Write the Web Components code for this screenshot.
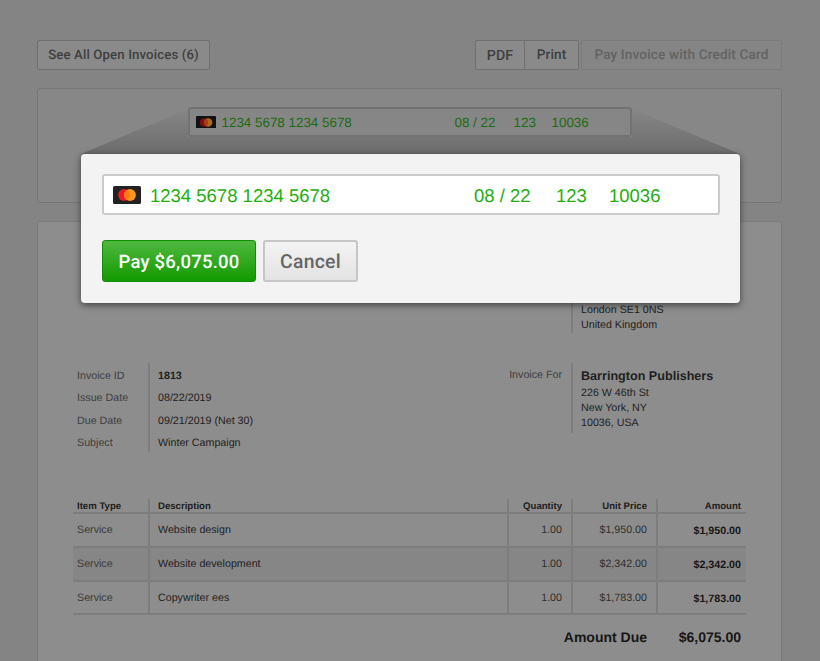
<!DOCTYPE html>
<html lang="en"><head><meta charset="utf-8"><title>Invoice</title>
<style>
html,body{margin:0;padding:0;height:661px;overflow:hidden;background:#848484}
</style></head><body>
<invoice-page>
  <tool-bar slot="toolbar">
    <ui-button slot="start" wide>See All Open Invoices (6)</ui-button>
    <button-group slot="end"><ui-button joined="left">PDF</ui-button><ui-button joined="right">Print</ui-button></button-group>
    <ui-button slot="end" disabled>Pay Invoice with Credit Card</ui-button>
  </tool-bar>
  <payment-card slot="payment"><card-field dim></card-field></payment-card>
  <invoice-sheet slot="sheet">
    <from-address></from-address>
    <invoice-details></invoice-details>
    <line-items></line-items>
  </invoice-sheet>
  <pay-modal slot="modal">
    <card-field></card-field>
    <ui-button slot="actions" primary>Pay $6,075.00</ui-button>
    <ui-button slot="actions" big>Cancel</ui-button>
  </pay-modal>
</invoice-page>
<script>
const SANS='"Liberation Sans",Arial,sans-serif', UI='Roboto,"Noto Sans",sans-serif';
function def(name,html,init){
  customElements.define(name,class extends HTMLElement{
    constructor(){super();const r=this.attachShadow({mode:'open'});const t=document.createElement('template');t.innerHTML=html;r.appendChild(t.content.cloneNode(true));if(init)init(r,this);}
  });
}
def('invoice-page',`<style>
:host{display:block;position:relative;width:820px;height:661px;overflow:hidden;box-sizing:border-box;padding:40px 38px 0 37px;background:#848484;text-rendering:geometricPrecision;opacity:.999}
.stack{display:flex;flex-direction:column;gap:18px}
.scrim{position:absolute;left:0;top:0;pointer-events:none}
::slotted([slot=modal]){position:absolute;left:81px;top:154px}
</style>
<div class="stack"><slot name="toolbar"></slot><slot name="payment"></slot><slot name="sheet"></slot></div>
<svg class="scrim" width="820" height="160" aria-hidden="true"><defs><linearGradient id="g" x1="0" y1="107" x2="0" y2="154" gradientUnits="userSpaceOnUse"><stop offset="0" stop-color="#000" stop-opacity="0"/><stop offset="1" stop-color="#000" stop-opacity=".2"/></linearGradient></defs>
<path fill="url(#g)" d="M81 154 188 109V137H632V109L740 154Z"/></svg>
<slot name="modal"></slot>`);
def('tool-bar',`<style>:host{display:flex;justify-content:space-between;align-items:flex-start;height:30px}
.e{display:flex;gap:2px}</style><slot name="start"></slot><div class="e"><slot name="end"></slot></div>`);
def('button-group',`<style>:host{display:flex}</style><slot></slot>`);
def('ui-button',`<style>
:host{display:inline-flex;align-items:center;justify-content:center;box-sizing:border-box;height:30px;padding:2px 0 0;border:1px solid #6f6f6f;border-radius:2px;
font:500 14.2px/1 ${UI};color:#3f3f3f;background:#8a8a8a;white-space:nowrap;letter-spacing:.01em}
:host([wide]){width:173px;font-size:13.2px}
:host([joined=left]){border-radius:2px 0 0 2px;width:50px}
:host([joined=right]){border-radius:0 2px 2px 0;border-left:0;width:54px;font-size:13.6px}
:host([disabled]){border-color:#7b7b7b;color:#636363;width:201px;background:#858585;font-size:13.6px}
:host([primary]){height:42px;width:154px;border:1px solid #128f00;border-radius:3px;color:#fff;font:500 18.5px/1 ${UI};letter-spacing:.012em;background:linear-gradient(#4fb83f,#129a00)}
:host([big]){height:42px;width:95px;border:2px solid #c6c6c6;border-radius:3px;color:#666;font:500 19.4px/1 ${UI};letter-spacing:.012em;background:linear-gradient(#f3f3f3,#e3e3e3)}
</style><slot></slot>`);
def('payment-card',`<style>:host{display:flex;justify-content:center;box-sizing:border-box;height:115px;padding:18px 0 0;background:#878787;border:1px solid #767676;border-radius:3px}</style><slot></slot>`);
def('card-field',`<style>
:host{display:grid;grid-template-columns:28px 9px 324px 82px 53px 1fr;align-items:center;box-sizing:border-box;font:400 18.5px/1 ${SANS};height:41px;width:618px;padding:0 0 0 9px;color:#1fae0f;background:#fff;border:2px solid #cbcbcb;border-radius:3px}
:host([dim]){grid-template-columns:20px 6px 233px 59px 38px 1fr;font-size:13.4px;height:30px;width:444px;padding-left:6px;color:#1c6b12;background:#868686;border-color:#727272}
svg{width:100%;height:auto;display:block}
span{position:relative;top:2px}
:host([dim]) span{top:1px}
:host([dim]) .r{fill:#7d0d10}:host([dim]) .o{fill:#a8691a}:host([dim]) .m{fill:#a53a14}:host([dim]) .k{fill:#111}
</style>
<svg viewBox="0 0 28 18" aria-hidden="true"><rect class="k" width="28" height="18" rx="1.5" fill="#222"/><circle class="r" cx="11" cy="9" r="5.9" fill="#ea1b22"/><circle class="o" cx="17" cy="9" r="5.9" fill="#f79a1e"/><path class="m" d="M14 3.92A5.9 5.9 0 0 1 14 14.08 5.9 5.9 0 0 1 14 3.92Z" fill="#ff7a13"/></svg>
<span></span><span>1234 5678 1234 5678</span><span>08 / 22</span><span>123</span><span>10036</span>`);
def('invoice-sheet',`<style>:host{display:block;box-sizing:border-box;height:460px;background:#8d8d8d;border:1px solid #7a7a7a;border-radius:3px;padding:0 35px;font:400 10.7px/15px ${SANS};color:#1f1f1f}</style><slot></slot>`);
def('from-address',`<style>:host{display:block;box-sizing:border-box;height:111px;margin-left:498px;padding:81px 0 0 8px;border-left:2px solid #7d7d7d}</style>London SE1 0NS<br>United Kingdom`);
def('invoice-details',`<style>
:host{display:flex;margin-top:30px;height:136px}
.l{display:grid;grid-template-columns:75px 1fr;width:498px;align-content:start;height:90px}
.k{color:#3e3e3e;padding:6px 0 0 4px;height:22.3px;box-sizing:border-box}
.v{border-left:2px solid #7d7d7d;padding:6px 0 0 8px;height:22.3px;box-sizing:border-box}
.v.first{font-weight:700}
.r{display:flex;height:70px}
.rk{width:0;white-space:nowrap;direction:rtl;color:#3e3e3e;padding:5px 0 0;margin-left:-9px;margin-right:9px}
.rv{border-left:2px solid #7d7d7d;padding:0 0 0 8px}
.rv strong{display:block;font-size:12.6px;line-height:16px;padding:5px 0 2px}
</style>
<div class="l"><div class="k">Invoice ID</div><div class="v first">1813</div><div class="k">Issue Date</div><div class="v">08/22/2019</div><div class="k">Due Date</div><div class="v">09/21/2019 (Net 30)</div><div class="k">Subject</div><div class="v">Winter Campaign</div></div>
<div class="r"><div class="rk">Invoice For</div><div class="rv"><strong>Barrington Publishers</strong>226 W 46th St<br>New York, NY<br>10036, USA</div></div>`);
def('line-items',`<style>
:host{display:block;width:673px}
.row{display:grid;grid-template-columns:75px 359px 64px 85px 90px;height:34px;border-bottom:2px solid #7d7d7d;box-sizing:border-box}
.row.last{height:33px}
.row.head{height:15px;font-weight:700;font-size:9.6px;line-height:14px;color:#1d1d1d}
.row.alt{background:#868686}
.row>*{padding:9px 9px 0 8px;border-left:2px solid #7d7d7d;box-sizing:border-box;white-space:nowrap}
.row.head>*{padding-top:1px}
.row>:first-child{border-left:0;padding-left:4px;color:#3a3a3a}
.row.head>:first-child{color:#1d1d1d}
.n{text-align:right;color:#2e2e2e}
.row>:last-child{padding-right:5px}
.row.head .n{color:#1d1d1d}
.t{font-weight:700;color:#151515;padding-top:10px!important}
.row.head .t{padding-top:1px!important}
.tot{display:grid;grid-template-columns:574px 94px;margin-top:13px;font:700 14px/18px ${SANS};color:#161616;text-align:right}
</style>
<div class="row head"><div>Item Type</div><div>Description</div><div class="n">Quantity</div><div class="n">Unit Price</div><div class="n t">Amount</div></div>
<div class="row"><div>Service</div><div>Website design</div><div class="n">1.00</div><div class="n">$1,950.00</div><div class="n t">$1,950.00</div></div>
<div class="row alt"><div>Service</div><div>Website development</div><div class="n">1.00</div><div class="n">$2,342.00</div><div class="n t">$2,342.00</div></div>
<div class="row last"><div>Service</div><div>Copywriter ees</div><div class="n">1.00</div><div class="n">$1,783.00</div><div class="n t">$1,783.00</div></div>
<div class="tot"><span>Amount Due</span><span>$6,075.00</span></div>`);
def('pay-modal',`<style>
:host{display:flex;flex-direction:column;box-sizing:border-box;width:659px;height:149px;padding:20px 21px;gap:25px;background:#f3f3f3;border-radius:4px;box-shadow:0 2px 7px rgba(0,0,0,.55)}
.a{display:flex;gap:7px}</style><slot></slot><div class="a"><slot name="actions"></slot></div>`);
</script>
</body></html>
